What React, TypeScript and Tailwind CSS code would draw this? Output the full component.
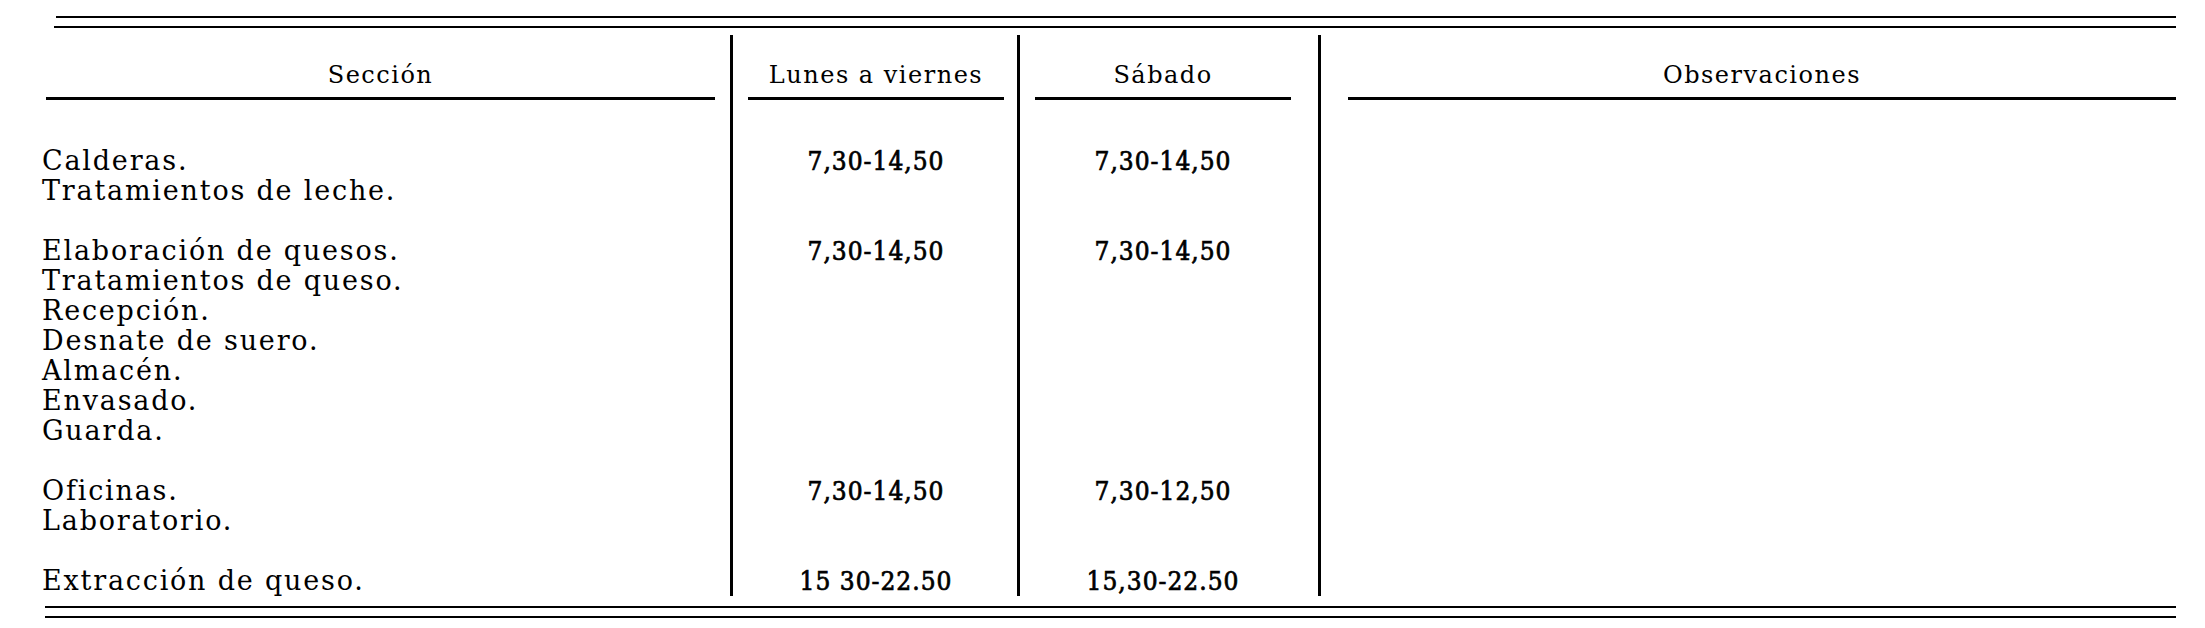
import React from 'react'

interface Group {
  lines: string[]
  week: string
  sat: string
}

const groups: Group[] = [
  { lines: ['Calderas.', 'Tratamientos de leche.'], week: '7,30-14,50', sat: '7,30-14,50' },
  {
    lines: [
      'Elaboración de quesos.',
      'Tratamientos de queso.',
      'Recepción.',
      'Desnate de suero.',
      'Almacén.',
      'Envasado.',
      'Guarda.',
    ],
    week: '7,30-14,50',
    sat: '7,30-14,50',
  },
  { lines: ['Oficinas.', 'Laboratorio.'], week: '7,30-14,50', sat: '7,30-12,50' },
  { lines: ['Extracción de queso.'], week: '15 30-22.50', sat: '15,30-22.50' },
]

const serif = "font-['DejaVu_Serif','Liberation_Serif',serif]"
const numFont =
  "font-['DejaVu_Serif_Condensed','DejaVu_Serif',serif] font-stretch-condensed [-webkit-text-stroke:0.7px_black] tracking-[1px]"

function HeaderCell({ label, className }: { label: string; className: string }) {
  return (
    <div className={`pt-[25px] ${className}`}>
      <div className={`${serif} text-center text-[24px] leading-[30px] tracking-[1.5px]`}>{label}</div>
      <div className="mt-[7px] h-[3px] bg-black" />
    </div>
  )
}

export default function App() {
  return (
    <div className="w-[2205px] h-[628px] bg-white text-black pt-[16px]">
      {/* top double rule */}
      <div className="ml-[56px] w-[2120px] h-[2px] bg-black" />
      <div className="ml-[54px] mt-[8px] w-[2122px] h-[2px] bg-black" />

      <div className="ml-[42px] mt-[7px] grid grid-cols-[688px_287px_301px_858px]">
        {/* header */}
        <HeaderCell label="Sección" className="pl-[4px] pr-[15px]" />
        <HeaderCell label="Lunes a viernes" className="border-l-[3px] border-black pl-[15px] pr-[13px]" />
        <HeaderCell label="Sábado" className="border-l-[3px] border-black pl-[15px] pr-[27px]" />
        <HeaderCell label="Observaciones" className="border-l-[3px] border-black pl-[27px]" />

        {/* body */}
        {groups.map((g, i) => {
          const pad = i === 0 ? 'pt-[46px]' : 'pt-[30px]'
          return (
            <React.Fragment key={i}>
              <div className={`${pad} ${serif} text-[27px] leading-[30px] tracking-[1.8px]`}>
                {g.lines.map((l) => (
                  <div key={l}>{l}</div>
                ))}
              </div>
              <div className={`${pad} border-l-[3px] border-black pl-[15px] pr-[13px]`}>
                <div className={`${numFont} text-center text-[26px] leading-[30px]`}>{g.week}</div>
              </div>
              <div className={`${pad} border-l-[3px] border-black pl-[15px] pr-[27px]`}>
                <div className={`${numFont} text-center text-[26px] leading-[30px]`}>{g.sat}</div>
              </div>
              <div className={`${pad} border-l-[3px] border-black`} />
            </React.Fragment>
          )
        })}
      </div>

      {/* bottom double rule */}
      <div className="ml-[45px] mt-[10px] w-[2131px] h-[2px] bg-black" />
      <div className="ml-[45px] mt-[8px] w-[2131px] h-[2px] bg-black" />
    </div>
  )
}
